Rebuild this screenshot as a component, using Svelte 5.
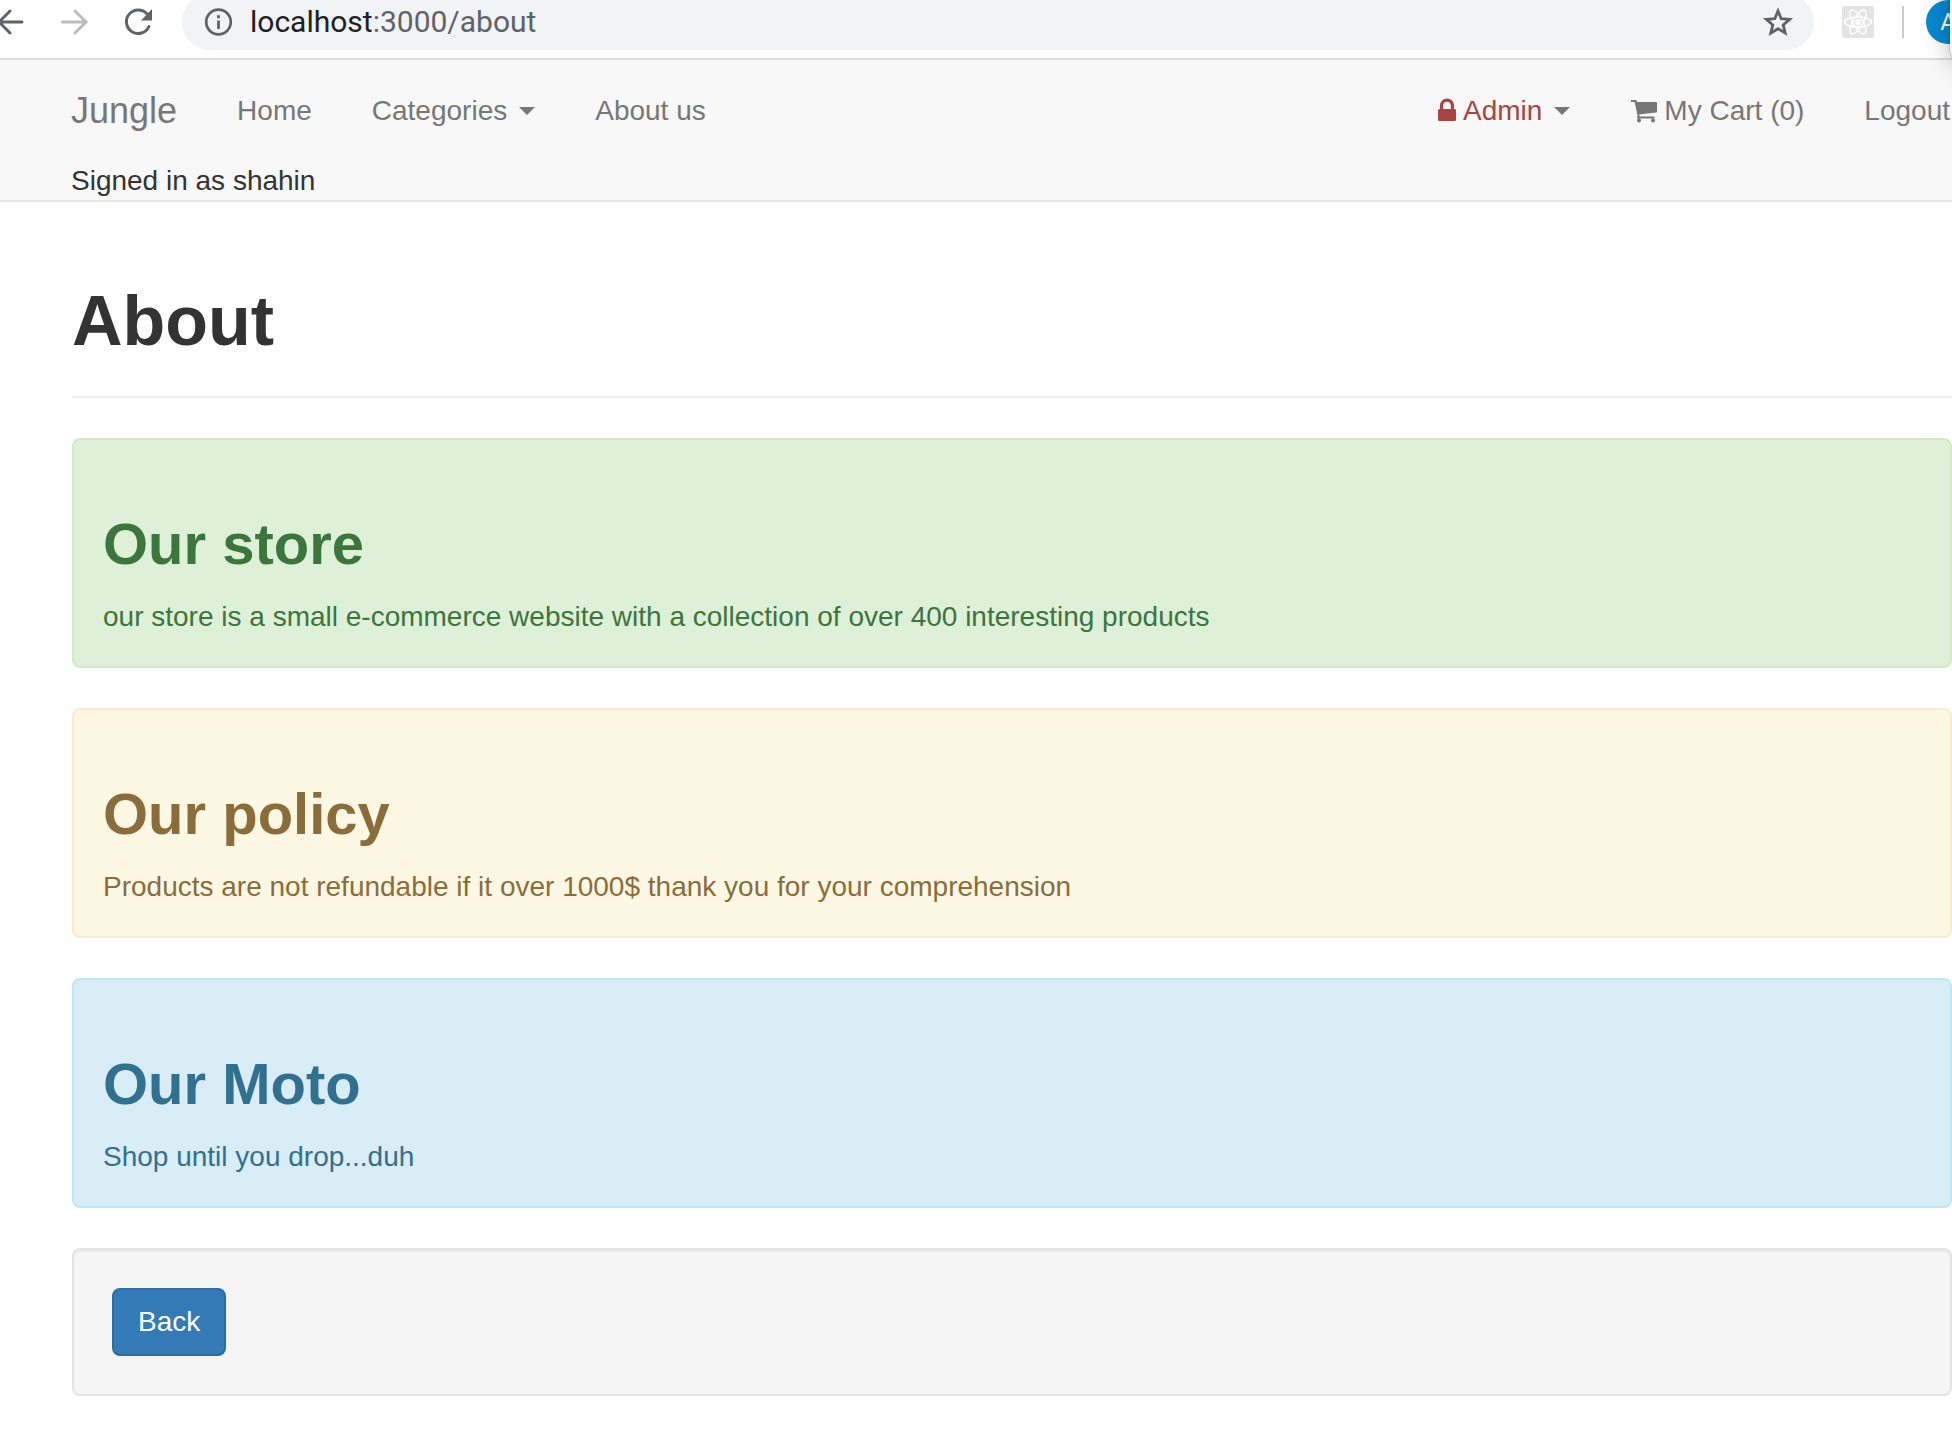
<script>
  const notices = [
    { kind: 'success', title: 'Our store', text: 'our store is a small e-commerce website with a collection of over 400 interesting products' },
    { kind: 'warning', title: 'Our policy', text: 'Products are not refundable if it over 1000$ thank you for your comprehension' },
    { kind: 'info', title: 'Our Moto', text: 'Shop until you drop...duh' }
  ];
  const host = 'localhost';
  const rest = ':3000/about';
</script>

<div class="toolbar">
  <div class="history">
    <button class="tool" aria-label="Back">
      <svg width="32" height="32" viewBox="0 0 32 32"><path d="M28 16H6M16 5 5 16l11 11" fill="none" stroke="#5f6368" stroke-width="3" stroke-linecap="round" /></svg>
    </button>
    <button class="tool" aria-label="Forward" disabled>
      <svg width="32" height="32" viewBox="0 0 32 32"><path d="M4.500 16h22M17 5l11 11-11 11" fill="none" stroke="#babcbe" stroke-width="3" stroke-linecap="round" /></svg>
    </button>
    <button class="tool" aria-label="Reload">
      <svg width="32" height="32" viewBox="0 0 32 32"><path d="M27 20.500A11.800 11.800 0 1 1 25 7.800" fill="none" stroke="#5f6368" stroke-width="3" stroke-linecap="round" /><path d="M30 3v11.500H19z" fill="#5f6368" /></svg>
    </button>
  </div>
  <div class="address">
    <svg width="28" height="28" viewBox="0 0 28 28"><circle cx="14.500" cy="14" r="12.300" fill="none" stroke="#5f6368" stroke-width="2.700" /><path d="M13.100 12.500h2.800v8.500h-2.800zM13.100 7.300h2.800v2.900h-2.800z" fill="#5f6368" /></svg>
    <a class="url" href="#about"><span>{host}</span>{rest}</a>
    <button class="tool" aria-label="Bookmark this page">
      <svg width="32" height="32" viewBox="0 0 32 32"><path d="m16 5 3.200 7.700 8.400.7-6.400 5.500 2 8.200-7.200-4.400-7.200 4.400 2-8.200-6.400-5.500 8.400-.7z" fill="none" stroke="#5f6368" stroke-width="2.800" /></svg>
    </button>
  </div>
  <button class="tool" aria-label="React developer tools">
    <svg width="32" height="32" viewBox="0 0 32 32">
      <rect width="32" height="32" rx="2" fill="#e4e4e4" />
      <g fill="none" stroke="#fff" stroke-width="1.500">
        <ellipse cx="16" cy="16" rx="13.500" ry="5" />
        <ellipse cx="16" cy="16" rx="13.500" ry="5" transform="rotate(60 16 16)" />
        <ellipse cx="16" cy="16" rx="13.500" ry="5" transform="rotate(120 16 16)" />
      </g>
      <circle cx="16" cy="16" r="3" fill="#fff" />
    </svg>
  </button>
  <span class="divider"></span>
  <button class="avatar" aria-label="Profile">A</button>
  <div class="popup"></div>
</div>

<nav>
  <div class="row">
    <a class="brand" href="#top">Jungle</a>
    <a href="#home">Home</a>
    <a href="#categories">Categories <i class="caret"></i></a>
    <a href="#about">About us</a>
    <a class="right" href="#admin">
      <svg width="20" height="28" viewBox="0 0 20 28"><path d="M3 12V8.500a7 7 0 0 1 14 0V12h.5A1.500 1.500 0 0 1 19 13.500v9a1.500 1.500 0 0 1-1.500 1.500h-15A1.500 1.500 0 0 1 1 22.500v-9A1.500 1.500 0 0 1 2.500 12zm3.200 0h7.600V8.500a3.800 3.800 0 0 0-7.600 0z" fill="#a94442" /></svg>
      <span class="admin">Admin</span> <i class="caret"></i>
    </a>
    <a class="cart" href="#cart">
      <svg width="28" height="28" viewBox="0 0 28 28"><path d="M1 3h4.600q1 0 1.200 1l.2 1h19q1 0 1 1v8.500q0 1-1 1.100L9.200 17.600l.3 1.900H24.500v2H8q-1 0-1-1l.6-1.700L4.600 5H1zM7 23.500a2 2 0 1 0 4 0 2 2 0 0 0-4 0m14 0a2 2 0 1 0 4 0 2 2 0 0 0-4 0" fill="#777" /></svg>
      My Cart (0)
    </a>
    <a class="logout" href="#logout">Logout</a>
  </div>
  <div class="signed">Signed in as shahin</div>
</nav>

<main>
  <header><h1>About</h1></header>
  {#each notices as notice}
    <section class={notice.kind}>
      <h2>{notice.title}</h2>
      <p>{notice.text}</p>
    </section>
  {/each}
  <div class="well"><button class="back">Back</button></div>
</main>

<style>
  :global(body) {
    margin: 0;
    background: #fff;
    color: #333;
    font: 28px/40px "Liberation Sans", Arial, sans-serif;
    overflow-x: hidden;
  }
  button { font: inherit; cursor: pointer; }
  svg { display: block; flex: none; }
  a { color: #777; text-decoration: none; white-space: nowrap; }
  .toolbar {
    position: relative;
    display: flex;
    align-items: center;
    height: 44px;
    padding-bottom: 14px;
    border-bottom: 2px solid #dadce0;
  }
  .tool { padding: 0; border: 0; background: none; flex: none; }
  .history { display: flex; gap: 32px; width: 182px; margin-left: -6px; margin-right: 6px; flex: none; }
  .address {
    flex: 1;
    display: flex;
    align-items: center;
    height: 56px;
    box-sizing: border-box;
    padding: 0 20px 0 22px;
    margin-right: 28px;
    border-radius: 28px;
    background: #f1f3f4;
  }
  .url { flex: 1; margin-left: 18px; color: #5f6368; font: 30px/40px Roboto, sans-serif; }
  .url span { color: #202124; }
  .divider { width: 2px; height: 32px; margin: 0 22px 0 28px; background: #ccc; }
  .avatar {
    flex: none;
    width: 44px;
    height: 44px;
    margin-right: -18px;
    padding: 0;
    border: 0;
    border-radius: 50%;
    background: #0788d1;
    color: #fff;
    font: 24px/44px Roboto, sans-serif;
  }
  .popup {
    position: absolute;
    top: -20px;
    right: -38px;
    width: 40px;
    height: 80px;
    border-radius: 10px;
    background: #f6f6f6;
    box-shadow: 0 4px 24px rgba(0, 0, 0, .3), 0 0 2px rgba(0, 0, 0, .4);
  }
  nav { padding: 1px 2px 0 71px; background: #f8f8f8; border-bottom: 2px solid #e7e7e7; }
  .row { display: flex; align-items: center; gap: 60px; height: 100px; }
  .row a { display: flex; align-items: center; }
  .row .brand { font-size: 36px; }
  .caret { margin-left: 12px; border: 8px solid transparent; border-top-color: #777; border-bottom: 0; }
  .row .right { margin-left: auto; }
  .admin { margin-left: 6px; color: #a94442; }
  .cart { gap: 6px; }
  .signed { height: 39px; color: #333; }
  main { padding: 80px 0 56px 72px; }
  header { padding-bottom: 36px; margin-bottom: 40px; border-bottom: 2px solid #eee; }
  h1, h2 { margin: 0; font-weight: 700; }
  h1 { font-size: 70px; line-height: 78px; }
  h2 { margin: 40px 0 20px; font-size: 58px; line-height: 66px; }
  p { margin: 0; }
  section { display: flow-root; padding: 31px 29px 29px; margin-bottom: 40px; border: 2px solid; border-radius: 8px; }
  .success { color: #3c763d; background: #dff0d8; border-color: #d6e9c6; }
  .warning { color: #8a6d3b; background: #fcf8e3; border-color: #faebcc; }
  .info { color: #31708f; background: #d9edf7; border-color: #bce8f1; }
  .well {
    padding: 38px;
    border: 2px solid #e3e3e3;
    border-radius: 8px;
    background: #f5f5f5;
    box-shadow: inset 0 2px 2px rgba(0, 0, 0, .05);
  }
  .back {
    display: block;
    padding: 12px 24px;
    border: 2px solid #2e6da4;
    border-radius: 8px;
    background: #337ab7;
    color: #fff;
  }
</style>
